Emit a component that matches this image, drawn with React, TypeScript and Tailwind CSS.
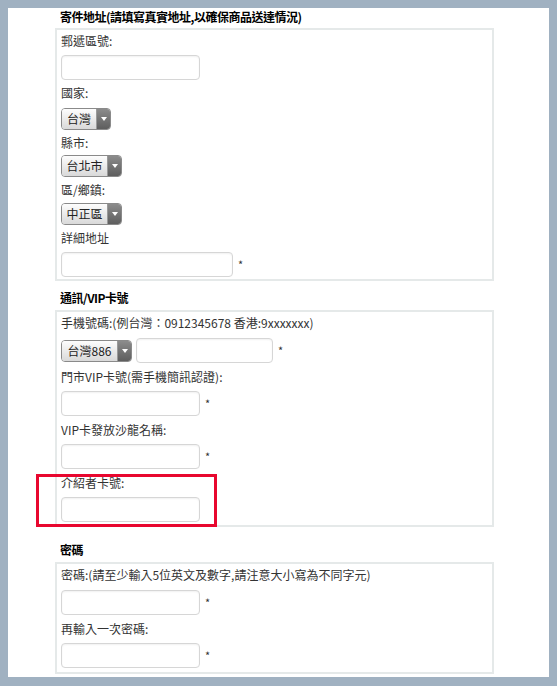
const font = { fontFamily: '"Noto Sans CJK TC", "Noto Sans", sans-serif' }

function Label({ children }: { children: React.ReactNode }) {
  return <div className="h-[18px] leading-[18px] text-[12px] text-[#333]">{children}</div>
}

function Input({ w = "w-[139px]", star = false }: { w?: string; star?: boolean }) {
  return (
    <div className="flex items-center">
      <div className={`${w} h-[25px] rounded-[4px] border border-[#d6d6d6] bg-white shadow-[inset_0_1px_2px_rgba(0,0,0,0.06)]`} />
      {star && <span className="ml-[5px] text-[11px] text-[#333] leading-none">*</span>}
    </div>
  )
}

function Select({ value, w }: { value: string; w: string }) {
  return (
    <div className={`${w} h-[22px] flex rounded-[4px] border border-[#8a8a8a] overflow-hidden`}>
      <div className="flex-1 flex items-center justify-center text-[12px] text-[#222] bg-gradient-to-b from-[#fdfdfd] to-[#d9d9d9] border-r border-[#9a9a9a]">
        {value}
      </div>
      <div className="w-[13px] flex items-center justify-center bg-gradient-to-b from-[#8c8c8c] to-[#5e5e5e]">
        <div className="w-0 h-0 border-l-[3px] border-r-[3px] border-t-[4px] border-l-transparent border-r-transparent border-t-white" />
      </div>
    </div>
  )
}

function Field({ label, children, gap = "mt-[5px]" }: { label: string; children: React.ReactNode; gap?: string }) {
  return (
    <div>
      <Label>{label}</Label>
      <div className={gap}>{children}</div>
    </div>
  )
}

function Title({ children }: { children: React.ReactNode }) {
  return <div className="pl-[5px] h-[18px] leading-[18px] text-[12px] font-bold tracking-[-0.5px] text-black">{children}</div>
}

function Box({ children, className = "" }: { children: React.ReactNode; className?: string }) {
  return (
    <div className={`relative w-[439px] border-2 border-[#e5e9e9] pl-[4px] pt-[2px] flex flex-col ${className}`}>
      {children}
    </div>
  )
}

export default function App() {
  return (
    <div className="w-[557px] h-[686px] bg-[#a0b1c1] pt-[8px] pl-[8px]" style={font}>
      <div className="w-[541px] h-[669px] bg-white pl-[47px] flex flex-col">
        <Title>寄件地址(請填寫真實地址,以確保商品送達情況)</Title>
        <Box className="mt-[2px] pb-[2px] gap-[4px]">
          <Field label="郵遞區號:">
            <Input />
          </Field>
          <Field label="國家:" gap="mt-[6px]">
            <Select value="台灣" w="w-[50px]" />
          </Field>
          <Field label="縣市:" gap="mt-[3px]">
            <Select value="台北市" w="w-[61px]" />
          </Field>
          <Field label="區/鄉鎮:" gap="mt-[4px]">
            <Select value="中正區" w="w-[61px]" />
          </Field>
          <Field label="詳細地址" gap="mt-[5px]">
            <Input w="w-[172px]" star />
          </Field>
        </Box>

        <div className="mt-[8px]">
          <Title>通訊/VIP卡號</Title>
        </div>
        <Box className="mt-[3px] pb-[3px] gap-[5px]">
          <Field label="手機號碼:(例台灣：0912345678 香港:9xxxxxxx)" gap="mt-[6px]">
            <div className="flex items-center gap-[4px]">
              <Select value="台灣886" w="w-[71px]" />
              <Input w="w-[137px]" star />
            </div>
          </Field>
          <Field label="門市VIP卡號(需手機簡訊認證):">
            <Input star />
          </Field>
          <Field label="VIP卡發放沙龍名稱:">
            <Input star />
          </Field>
          <div className="relative">
            <Field label="介紹者卡號:">
              <Input />
            </Field>
            <div className="absolute left-[-25px] top-[0px] w-[181px] h-[53px] border-[3px] border-[#e8072f]" />
          </div>
        </Box>

        <div className="mt-[14px]">
          <Title>密碼</Title>
        </div>
        <Box className="mt-[3px] pb-[4px] gap-[5px]">
          <Field label="密碼:(請至少輸入5位英文及數字,請注意大小寫為不同字元)" gap="mt-[6px]">
            <Input star />
          </Field>
          <Field label="再輸入一次密碼:">
            <Input star />
          </Field>
        </Box>
      </div>
    </div>
  )
}
